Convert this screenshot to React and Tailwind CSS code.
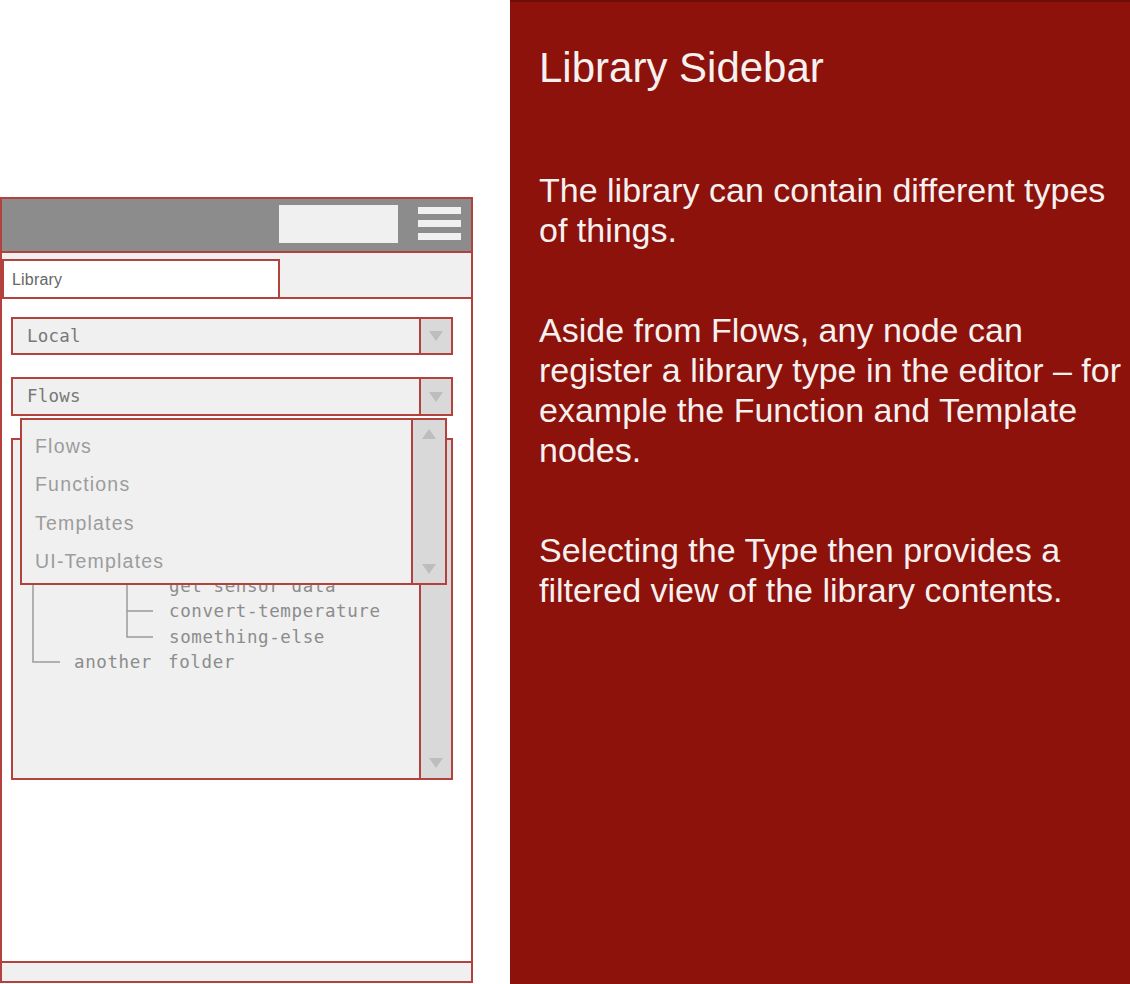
import React from "react";

const red = "border-[#b3423e]";

function Tri({ up = false, className = "" }) {
  return (
    <svg width="14" height="10" viewBox="0 0 14 10" className={className}>
      <polygon points={up ? "7,0 14,10 0,10" : "0,0 14,0 7,10"} fill="#bdbdbd" />
    </svg>
  );
}

function Select({ label, children, h = "h-[38px]" }) {
  return (
    <div className={`relative ml-[9px] w-[442px] ${h} flex border-2 ${red} bg-[#f0f0f0]`}>
      <div className="flex-1 flex items-center pl-[14px] text-[17.5px] text-[#787878] [font-family:'DejaVu_Sans_Mono',monospace] tracking-[0.2px]">
        {label}
      </div>
      <div className={`w-[32px] border-l-2 ${red} bg-[#d9d9d9] flex items-center justify-center`}>
        <Tri />
      </div>
      {children}
    </div>
  );
}

const dropItems = ["Flows", "Functions", "Templates", "UI-Templates"];

// rows hidden under the open dropdown are left empty
const treeRows = [
  null,
  null,
  null,
  null,
  null,
  { lvl: 2, text: "get sensor data" },
  { lvl: 2, text: "convert-temperature" },
  { lvl: 2, text: "something-else" },
  { lvl: 1, text: "another folder" },
];

export default function App() {
  return (
    <div className="w-[1130px] h-[984px] flex bg-white overflow-hidden">
      {/* wireframe of the sidebar */}
      <div className="w-[510px] shrink-0 pt-[197px]">
        <div className={`w-[473px] h-[786px] border-2 ${red} flex flex-col bg-white`}>
          <div className={`h-[54px] shrink-0 bg-[#8c8c8c] border-b-2 ${red} flex items-start`}>
            <div className="ml-[277px] mt-[6px] w-[119px] h-[38px] bg-[#f0f0f0]" />
            <div className="ml-[20px] mt-[8px] w-[43px] flex flex-col gap-[6px]">
              <div className="h-[7px] bg-[#f0f0f0]" />
              <div className="h-[7px] bg-[#f0f0f0]" />
              <div className="h-[7px] bg-[#f0f0f0]" />
            </div>
          </div>
          <div className={`h-[46px] shrink-0 bg-[#f0f0f0] border-b-2 ${red} flex items-end`}>
            <div className={`w-[278px] h-[40px] -mb-[2px] bg-white border-2 ${red} flex items-center pl-[8px] pt-[2px] text-[16px] text-[#666] tracking-[0.2px] [font-family:'Liberation_Sans',sans-serif]`}>
              Library
            </div>
          </div>
          <div className="flex-1 flex flex-col pt-[18px]">
            <Select label="Local" />
            <div className="h-[22px]" />
            <Select label="Flows" h="h-[39px]">
              <div className={`absolute left-[7px] top-[39px] z-10 w-[427px] h-[167px] border-2 ${red} bg-[#f0f0f0] flex`}>
                <div className="flex-1 pt-[7px] pl-[13px] [font-family:'Liberation_Sans',sans-serif] text-[19.5px] tracking-[1.2px] text-[#9c9c9c]">
                  {dropItems.map((t) => (
                    <div key={t} className="h-[38.5px] flex items-center">{t}</div>
                  ))}
                </div>
                <div className={`w-[34px] border-l-2 ${red} bg-[#d9d9d9] flex flex-col items-center justify-between pt-[9px] pb-[9px]`}>
                  <Tri up />
                  <Tri />
                </div>
              </div>
            </Select>
            <div className="h-[22px]" />
            <div className={`relative ml-[9px] w-[442px] h-[342px] flex border-2 ${red} bg-[#f0f0f0]`}>
              <div className="relative flex-1 pt-[5px] [font-family:'DejaVu_Sans_Mono',monospace] text-[17.5px] tracking-[0.6px] text-[#8c8c8c] overflow-hidden">
                <svg className="absolute left-0 top-0" width="410" height="240" viewBox="0 0 410 240">
                  <g stroke="#9a9a9a" strokeWidth="1.5" fill="none">
                    <path d="M20 10 V222 H47" />
                    <path d="M114 10 V197 H140" />
                    <path d="M114 171 H140" />
                  </g>
                </svg>
                {treeRows.map((r, i) => (
                  <div
                    key={i}
                    className={`h-[25.6px] flex items-center whitespace-nowrap ${r && r.lvl === 1 ? "pl-[61px] [word-spacing:5px]" : "pl-[156px]"}`}
                  >
                    {r ? r.text : ""}
                  </div>
                ))}
              </div>
              <div className={`w-[32px] border-l-2 ${red} bg-[#d9d9d9] flex flex-col items-center justify-end pb-[10px]`}>
                <Tri />
              </div>
            </div>
          </div>
          <div className={`h-[20px] shrink-0 border-t-2 ${red} bg-[#f0f0f0]`} />
        </div>
      </div>

      {/* description panel */}
      <div className="flex-1 bg-[#8c120b] border-t-2 border-[#6e0e08] pl-[29px] pt-[42px] text-[#f6f0ef] [font-family:'Liberation_Sans',Arial,sans-serif] whitespace-nowrap">
        <div className="text-[42px] leading-[48px]">Library Sidebar</div>
        <div className="mt-[78px] text-[34px] leading-[40px] flex flex-col gap-[60px]">
          <p>
            The library can contain different types
            <br />
            of things.
          </p>
          <p>
            Aside from Flows, any node can
            <br />
            register a library type in the editor – for
            <br />
            example the Function and Template
            <br />
            nodes.
          </p>
          <p>
            Selecting the Type then provides a
            <br />
            filtered view of the library contents.
          </p>
        </div>
      </div>
    </div>
  );
}
